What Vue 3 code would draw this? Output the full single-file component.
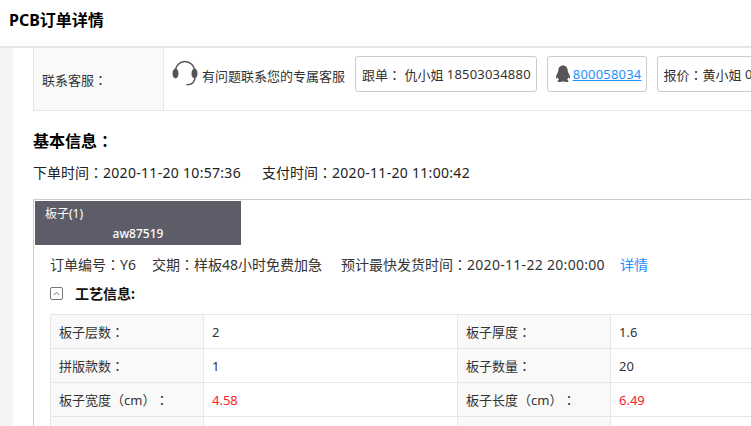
<script setup>
const rows = [
  [{ label: '板子层数：', value: '2' }, { label: '板子厚度：', value: '1.6' }],
  [{ label: '拼版款数：', value: '1' }, { label: '板子数量：', value: '20' }],
  [{ label: '板子宽度（cm）：', value: '4.58', red: true }, { label: '板子长度（cm）：', value: '6.49', red: true }],
  [{ label: '', value: '' }, { label: '', value: '' }]
]
</script>

<template>
  <div class="page">
    <header class="topbar"><h1>PCB订单详情</h1></header>
    <div class="body">
      <aside class="side"></aside>
      <main class="main">
        <section class="contact">
          <div class="contact-label">联系客服：</div>
          <div class="contact-value">
            <svg class="headset" width="26" height="26" viewBox="0 0 26 26">
              <path d="M3.5 13 V11 A9.5 9.5 0 0 1 22.5 11 V13" fill="none" stroke="#555" stroke-width="1.5" />
              <path d="M23 18 C22.5 22.5 19 24.8 14.5 24.8" fill="none" stroke="#555" stroke-width="1.5" />
              <ellipse cx="3.5" cy="13.5" rx="3" ry="5" fill="#555" />
              <ellipse cx="22.5" cy="13.5" rx="3" ry="5" fill="#555" />
            </svg>
            <span class="hint">有问题联系您的专属客服</span>
            <div class="chip chip-follow">跟单： 仇小姐 <span class="num-sm">18503034880</span></div>
            <div class="chip chip-qq">
              <svg class="qq" width="16" height="18" viewBox="0 0 16 18">
                <path fill="#555" d="M8 0.5 C4.8 0.5 3.4 3 3.3 5.6 C3.3 6.6 3 7.2 2.3 8.4 C1.3 10 0.7 11.8 1 13.4 C1.4 13.8 2 13 2.5 12.2 C2.8 13.2 3.2 14 3.9 14.7 C2.9 15.2 2.2 15.8 2.6 16.5 C3.2 17.3 5.8 17.3 7 16.4 C7.6 16.5 8.4 16.5 9 16.4 C10.2 17.3 12.8 17.3 13.4 16.5 C13.8 15.8 13.1 15.2 12.1 14.7 C12.8 14 13.2 13.2 13.5 12.2 C14 13 14.6 13.8 15 13.4 C15.3 11.8 14.7 10 13.7 8.4 C13 7.2 12.7 6.6 12.7 5.6 C12.6 3 11.2 0.5 8 0.5 Z" />
              </svg>
              <a class="qq-link num-sm">800058034</a>
            </div>
            <div class="chip chip-quote">报价：黄小姐 <span class="num-sm">0755-23200000</span></div>
          </div>
        </section>

        <h2 class="basic-title">基本信息：</h2>
        <div class="times">
          <span>下单时间：<span class="num">2020-11-20 10:57:36</span></span>
          <span>支付时间：<span class="num">2020-11-20 11:00:42</span></span>
        </div>

        <section class="card">
          <div class="tab">
            <div class="tab-name">板子(1)</div>
            <div class="tab-code">aw87519</div>
          </div>
          <div class="card-body">
            <div class="order-line">
              <span>订单编号：Y6</span>
              <span class="order-term">交期：样板48小时免费加急</span>
              <span class="order-ship">预计最快发货时间：<span class="num">2020-11-22 20:00:00</span></span>
              <a class="detail">详情</a>
            </div>
            <div class="craft-head">
              <span class="toggle">
                <svg width="7" height="5" viewBox="0 0 7 5"><path d="M0.8 4 L3.5 1.2 L6.2 4" fill="none" stroke="#777" stroke-width="1" /></svg>
              </span>
              <h3>工艺信息:</h3>
            </div>
            <div class="craft-table">
              <template v-for="(row, i) in rows" :key="i">
                <template v-for="(cell, j) in row" :key="j">
                  <div class="cell label">{{ cell.label }}</div>
                  <div class="cell value" :class="{ red: cell.red }">{{ cell.value }}</div>
                </template>
              </template>
            </div>
          </div>
        </section>
      </main>
    </div>
  </div>
</template>

<style scoped>
.page {
  width: 751px;
  height: 426px;
  overflow: hidden;
  background: #fff;
  color: #333;
  font-family: "Noto Sans", "Noto Sans CJK TC", sans-serif;
  font-size: 13px;
  text-spacing-trim: space-all;
  display: flex;
  flex-direction: column;
}
.topbar {
  height: 46px;
  flex: none;
  border-bottom: 2px solid #e6e6e6;
  display: flex;
  align-items: center;
  padding-left: 9px;
}
.topbar h1 {
  margin: 0 0 9px;
  font-size: 16px;
  font-weight: 700;
  color: #000;
}
.body {
  flex: 1;
  display: flex;
  min-height: 0;
}
.side {
  width: 13px;
  flex: none;
  background: #f4f4f4;
}
.main {
  width: 900px;
  flex: none;
  padding-left: 20px;
}
.num {
  letter-spacing: 0.3px;
}
.num-sm {
  letter-spacing: 0.2px;
}
.contact {
  display: flex;
  height: 62px;
  border-left: 1px solid #e6e6e6;
  border-bottom: 1px solid #e6e6e6;
}
.contact-label {
  width: 130px;
  flex: none;
  box-sizing: border-box;
  padding-left: 8px;
  background: #f9f9f9;
  border-right: 1px solid #e6e6e6;
  display: flex;
  align-items: center;
}
.contact-value {
  display: flex;
  align-items: center;
  align-self: flex-start;
  height: 36px;
  margin-top: 8px;
  padding-left: 8px;
  white-space: nowrap;
}
.headset {
  flex: none;
  margin-top: -2px;
}
.hint {
  margin: 2px 10px 0 4px;
}
.chip {
  height: 36px;
  box-sizing: border-box;
  border: 1px solid #ccc;
  border-radius: 3px;
  display: flex;
  align-items: center;
  padding: 0 5px 0 6px;
  margin-right: 10px;
  flex: none;
  white-space: pre;
}
.chip-qq {
  padding-left: 7px;
  padding-right: 4px;
}
.qq {
  margin-right: 2px;
}
.qq-link {
  color: #1e90ff;
  text-decoration: underline;
}
.basic-title {
  margin: 19px 0 0;
  font-size: 16px;
  line-height: 22px;
  font-weight: 700;
  color: #000;
}
.times {
  margin-top: 11px;
  display: flex;
  gap: 21px;
  font-size: 14px;
  line-height: 20px;
  color: #222;
}
.card {
  margin-top: 16px;
  border-style: solid;
  border-color: #ccc;
  border-width: 1px 0 0 1px;
  height: 400px;
}
.tab {
  width: 206px;
  height: 44px;
  margin: 1px 0 0 1px;
  box-sizing: border-box;
  background: #5c5d68;
  color: #fff;
  font-size: 12px;
  line-height: 20px;
  padding: 3px 10px 0;
}
.tab-code {
  text-align: center;
  font-weight: 500;
}
.card-body {
  padding-left: 16px;
}
.order-line {
  margin-top: 10px;
  font-size: 14px;
  line-height: 20px;
  display: flex;
  white-space: nowrap;
  color: #333;
}
.order-term {
  margin-left: 16px;
}
.order-ship {
  margin-left: 19px;
}
.detail {
  margin-left: 15px;
  color: #1e90ff;
}
.craft-head {
  margin-top: 8px;
  display: flex;
  align-items: center;
  height: 20px;
}
.toggle {
  width: 13px;
  height: 13px;
  box-sizing: border-box;
  border: 1px solid #777;
  border-radius: 2px;
  display: flex;
  align-items: center;
  justify-content: center;
}
.craft-head h3 {
  margin: 0 0 1px 12px;
  font-size: 14px;
  font-weight: 700;
  color: #111;
}
.craft-table {
  margin-top: 11px;
  display: grid;
  grid-template-columns: 153px 254px 153px 200px;
  grid-auto-rows: 34px;
  border-top: 1px solid #e6e6e6;
  border-left: 1px solid #e6e6e6;
}
.cell {
  box-sizing: border-box;
  border-right: 1px solid #e6e6e6;
  border-bottom: 1px solid #e6e6e6;
  display: flex;
  align-items: center;
  padding-left: 8px;
}
.label {
  background: #f9f9f9;
}
.red {
  color: #f5222d;
}
</style>
